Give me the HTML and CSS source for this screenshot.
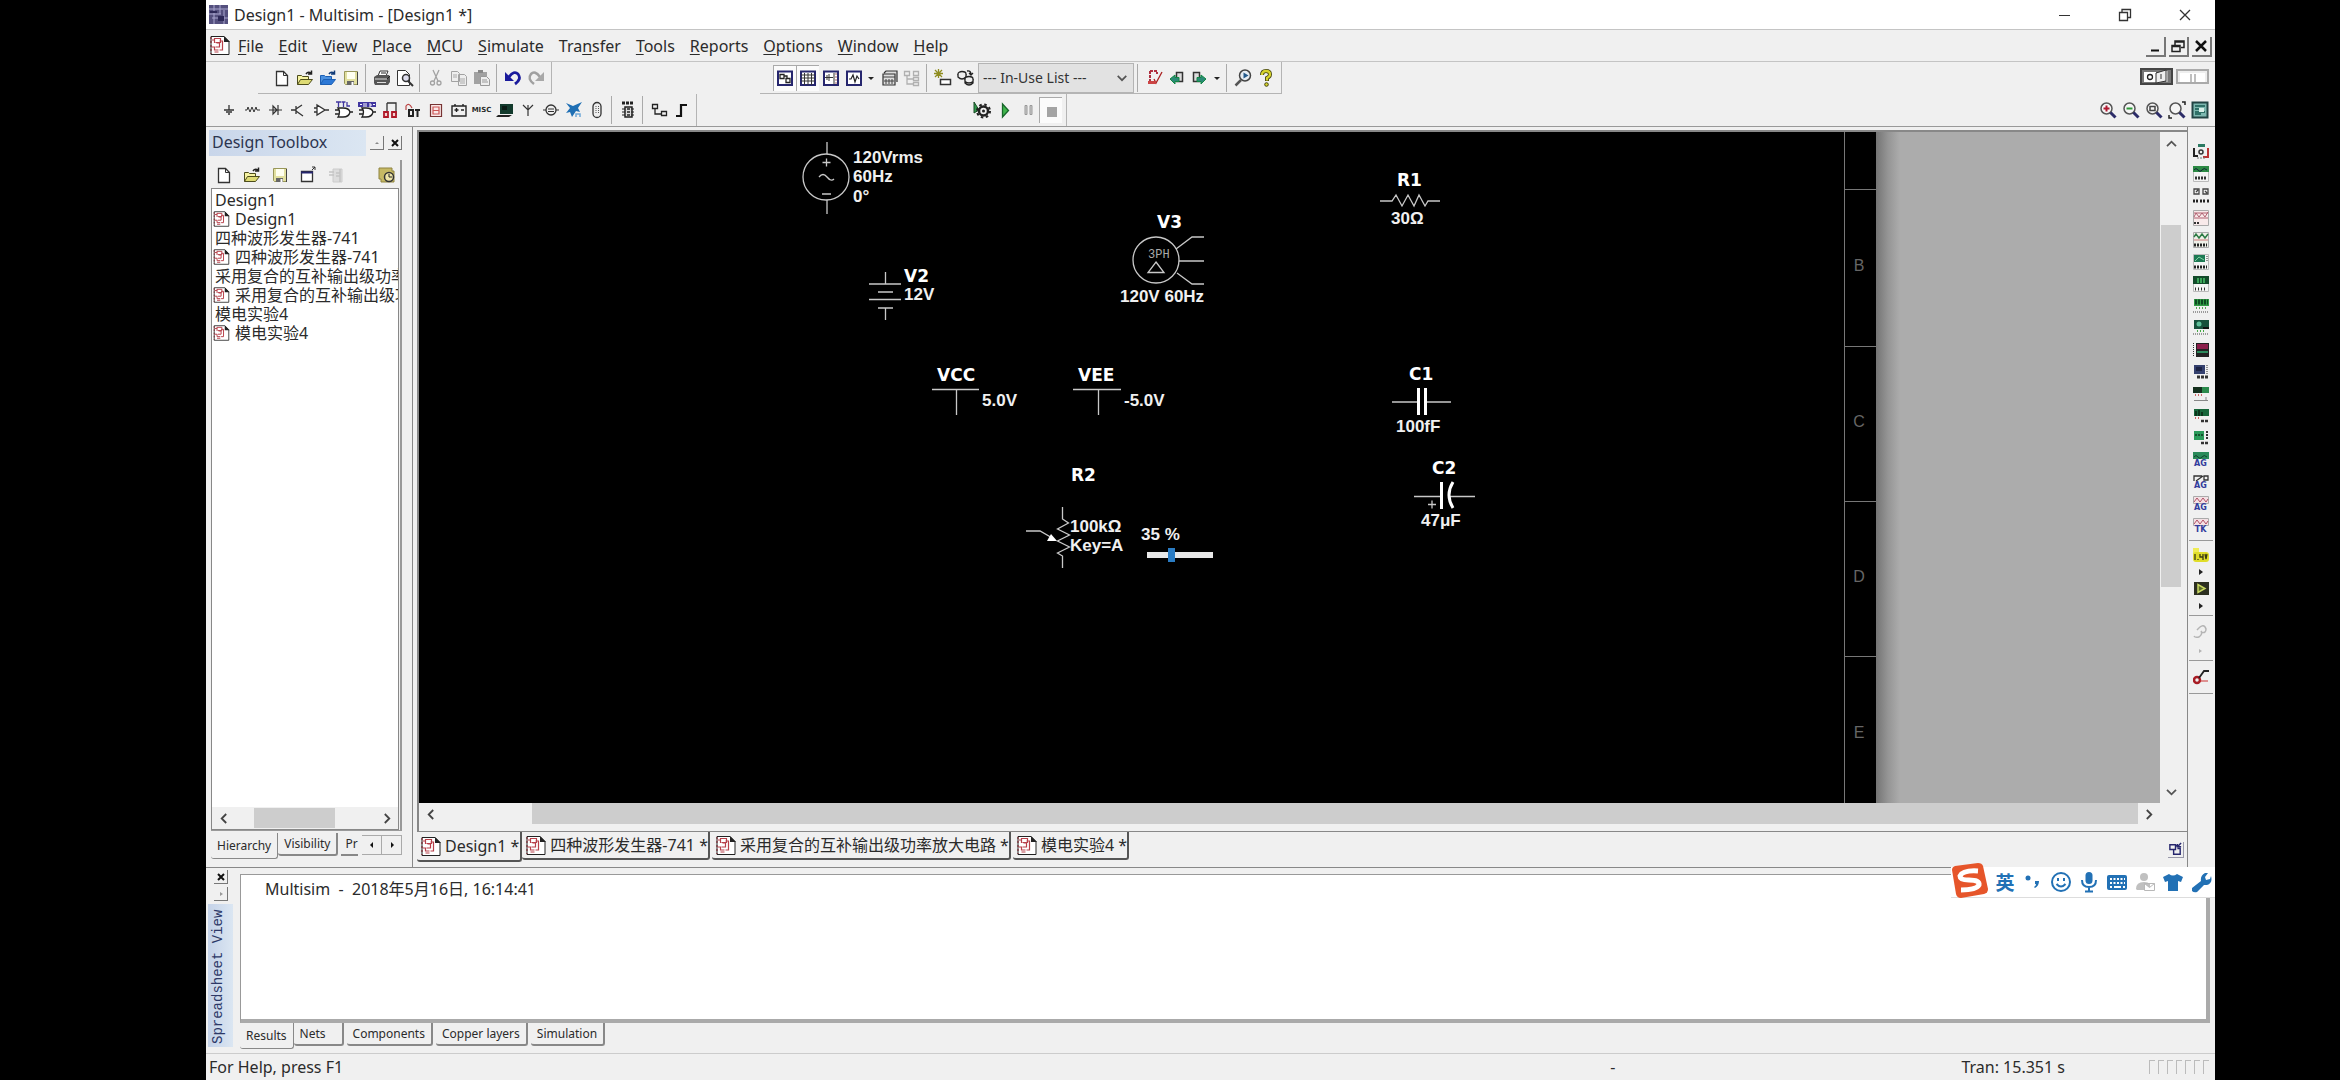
FILE: index.html
```html
<!DOCTYPE html>
<html lang="en">
<head>
<meta charset="utf-8">
<title>Design1 - Multisim - [Design1 *]</title>
<link rel="stylesheet" href="styles.css">
</head>
<body>
<svg class="defs" aria-hidden="true">
  <symbol id="i-sheet" viewBox="0 0 21 21"><path d="M1.500 1.500h13l5 5v13h-18z" fill="#fff" stroke="#222"/><path d="M14.500 1v6h6z" fill="#222"/><path d="M2 5h3M5 3v5M5 3.500h6v4h-5M7 8h3v4h-4M10 6h3v9h-3M2 12h3v3h4M5 17h4" fill="none" stroke="#b8404a" stroke-width="1.200"/><path d="M1.500 2v17" stroke="#7a1620" stroke-dasharray="2 2"/></symbol>
  <symbol id="i-new" viewBox="0 0 18 18"><path d="M3.500 2.500h7l4 4v10h-11z" fill="#fff" stroke="#333" stroke-width="1.300"/><path d="M10.500 2.500v4h4" fill="none" stroke="#333"/></symbol>
  <symbol id="i-open" viewBox="0 0 18 18"><path d="M1.500 15.500v-9h4l1 1h6v3" fill="#f6f3a2" stroke="#4d4d1c"/><path d="M1.500 15.500l3-5h12l-4 5z" fill="#dedb74" stroke="#4d4d1c"/><path d="M10 5q2-3 5-1M15.500 1.500v3.500h-3.500" fill="none" stroke="#222" stroke-width="1.500"/></symbol>
  <symbol id="i-openblue" viewBox="0 0 18 18"><path d="M1.500 15.500v-9h4l1 1h6v3" fill="#4a90e0" stroke="#1c5fb4"/><path d="M1.500 15.500l3-5h12l-4 5z" fill="#2c78d6" stroke="#1c5fb4"/><path d="M10 5q2-3 5-1M15.500 1.500v3.500h-3.500" fill="none" stroke="#123c78" stroke-width="1.500"/></symbol>
  <symbol id="i-save" viewBox="0 0 18 18"><path d="M2.500 2.500h13v13h-12l-1-1z" fill="#e2e0a0" stroke="#99975a"/><path d="M5 3h8v7h-8z" fill="#fffff0"/><path d="M5 12h7v4h-7z" fill="#666"/><path d="M9.500 13h2v3h-2z" fill="#fff"/><path d="M15.500 3v13" stroke="#444"/></symbol>
  <symbol id="i-left" viewBox="0 0 10 14"><path d="M8 2L3 7l5 5" fill="none" stroke="#444" stroke-width="2"/></symbol>
  <symbol id="i-right" viewBox="0 0 10 14"><path d="M2 2l5 5-5 5" fill="none" stroke="#444" stroke-width="2"/></symbol>
  <symbol id="i-up" viewBox="0 0 14 10"><path d="M2 8l5-5 5 5" fill="none" stroke="#555" stroke-width="2"/></symbol>
  <symbol id="i-down" viewBox="0 0 14 10"><path d="M2 2l5 5 5-5" fill="none" stroke="#555" stroke-width="2"/></symbol>
  <symbol id="i-x" viewBox="0 0 10 10"><path d="M2 2l6 6M8 2L2 8" stroke="#111" stroke-width="2"/></symbol>
  <symbol id="i-drop" viewBox="0 0 8 18"><path d="M1 8h6L4 11z" fill="#222"/></symbol>
  <symbol id="i-lens" viewBox="0 0 18 18"><circle cx="7.500" cy="7.500" r="5.500" fill="#f6f6f6" stroke="#555" stroke-width="1.500"/><path d="M11.500 11.500l5 5" stroke="#2c2c68" stroke-width="3"/></symbol>
</svg>

<div class="app">
  <header class="titlebar">
    <svg class="logo" viewBox="0 0 19 19"><rect width="19" height="19" fill="#54507e"/><path d="M0 4h19M0 9h12M3 13h16M5 0v19M11 0v9M15 5v14" stroke="#a9a6cf"/><path d="M1 6h7v2H1zM9 11h6v5H9z" fill="#2d2958"/></svg>
    <h1>Design1 - Multisim - [Design1 *]</h1>
    <div class="winbtns">
      <button aria-label="Minimize"><svg viewBox="0 0 14 14"><path d="M1 7.500h11" stroke="#333"/></svg></button>
      <button aria-label="Restore"><svg viewBox="0 0 14 14"><path d="M1.500 4.500h8v8h-8zM4 4V1.500h8.500v8H10" fill="none" stroke="#333" stroke-width="1.300"/></svg></button>
      <button aria-label="Close"><svg viewBox="0 0 14 14"><path d="M2 2l10 10M12 2L2 12" stroke="#333" stroke-width="1.300"/></svg></button>
    </div>
  </header>

  <nav class="menubar">
    <svg class="sheet"><use href="#i-sheet"/></svg>
    <button><u>F</u>ile</button><button><u>E</u>dit</button><button><u>V</u>iew</button><button><u>P</u>lace</button><button><u>M</u>CU</button><button><u>S</u>imulate</button><button>Tra<u>n</u>sfer</button><button><u>T</u>ools</button><button><u>R</u>eports</button><button><u>O</u>ptions</button><button><u>W</u>indow</button><button><u>H</u>elp</button>
    <div class="mdibtns">
      <button aria-label="Minimize sheet"><svg viewBox="0 0 16 16"><path d="M4 12.500h8" stroke="#111" stroke-width="2"/></svg></button>
      <button aria-label="Restore sheet"><svg viewBox="0 0 16 16"><path d="M2 7.500h8v6H2zM5 7V3h9v6.500h-3M2 8.500h8M5 4h9" fill="none" stroke="#222" stroke-width="1.500"/></svg></button>
      <button aria-label="Close sheet"><svg viewBox="0 0 16 16"><path d="M3 3l10 10M13 3L3 13" stroke="#111" stroke-width="2.500"/></svg></button>
    </div>
  </nav>

  <div class="toolrow">
    <div class="group standard">
      <button aria-label="New"><svg><use href="#i-new"/></svg></button>
      <button aria-label="Open"><svg><use href="#i-open"/></svg></button>
      <button aria-label="Open sample"><svg><use href="#i-openblue"/></svg></button>
      <button aria-label="Save"><svg><use href="#i-save"/></svg></button>
      <i class="sep"></i>
      <button aria-label="Print"><svg viewBox="0 0 18 18"><path d="M5 7l2-5h8l-2 5" fill="#fff" stroke="#333"/><path d="M1 8l3-2h12l1 2v5l-2 3H2l-1-2z" fill="#555"/><path d="M2 10h12M4 13.500h9" stroke="#ddd"/><path d="M14 10l3-3M8 4h5" stroke="#222"/></svg></button>
      <button aria-label="Print preview"><svg viewBox="0 0 18 18"><path d="M1.500 1.500h8l4 4v11h-12z" fill="#fff" stroke="#333"/><circle cx="10" cy="9" r="3.500" fill="#dde" stroke="#333" stroke-width="1.500"/><path d="M12 12l5 5" stroke="#333" stroke-width="2"/></svg></button>
      <i class="sep"></i>
      <button aria-label="Cut"><svg viewBox="0 0 18 18"><g fill="none" stroke="#a2a2a2" stroke-width="1.300"><path d="M6 1l5 11M12 1L7 12"/><circle cx="5.500" cy="14" r="2"/><circle cx="12" cy="14" r="2"/></g></svg></button>
      <button aria-label="Copy"><svg viewBox="0 0 18 18"><path d="M1.500 2.500h6l2 2v8h-8zM8.500 5.500h6l2 2v9h-8z" fill="#eee" stroke="#a2a2a2"/><path d="M3 6h4M3 8h4M10 10h5M10 12h5M10 14h5" stroke="#aaa"/></svg></button>
      <button aria-label="Paste"><svg viewBox="0 0 18 18"><path d="M1 3h13v12H1z" fill="#a2a2a2"/><path d="M5 1h5v3H5z" fill="#888"/><path d="M7.500 7.500h6l3 3v6h-9z" fill="#eee" stroke="#999"/><path d="M9 11h5M9 13h6" stroke="#999"/></svg></button>
      <i class="sep"></i>
      <button aria-label="Undo"><svg viewBox="0 0 18 18"><path d="M5 8q5-7 9-3 4 5-3 10" fill="none" stroke="#1a1a9c" stroke-width="2.800"/><path d="M1 3v9h9z" fill="#1a1a9c"/></svg></button>
      <button aria-label="Redo"><svg viewBox="0 0 18 18"><path d="M13 8Q8 1 4 5q-4 5 3 10" fill="none" stroke="#a0a0a0" stroke-width="2.500"/><path d="M17 3v9H8z" fill="#a8a8a8"/></svg></button>
    </div>

    <div class="group main">
      <button class="on" aria-label="Design toolbox"><svg viewBox="0 0 18 18"><path d="M2 2.500h14v13.500H2z" fill="#fff" stroke="#26266e" stroke-width="2"/><path d="M4 5.500h4v4H4zM10 9.500h4v4h-4zM8 7h3v3" fill="none" stroke="#222" stroke-width="1.300"/></svg></button>
      <button class="on" aria-label="Spreadsheet view"><svg viewBox="0 0 18 18"><path d="M2 2.500h14v13.500H2z" fill="#fff" stroke="#26266e" stroke-width="2"/><path d="M2 6h14M2 9h14M2 12h14M5.500 4v12M9 4v12M12.500 4v12" stroke="#333"/></svg></button>
      <button aria-label="SPICE netlist"><svg viewBox="0 0 18 18"><path d="M2 2.500h14v13.500H2z" fill="#fff" stroke="#26266e" stroke-width="2"/><path d="M3 8.500h8M7 5v7M5 6v5M12 4v11" stroke="#333"/><path d="M14 4v11" stroke="#a66" stroke-dasharray="2 1"/></svg></button>
      <button aria-label="Grapher"><svg viewBox="0 0 18 18"><path d="M2 2.500h14v13.500H2z" fill="#fff" stroke="#26266e" stroke-width="2"/><path d="M4 10h2l2-4 2 7 2-6 2 3" fill="none" stroke="#222" stroke-width="1.200"/></svg></button>
      <button class="drop" aria-label="Grapher list"><svg><use href="#i-drop"/></svg></button>
      <button aria-label="Postprocessor"><svg viewBox="0 0 18 18"><path d="M3 5h12v11H3zM4 4l2-2h11v11" fill="#ddd" stroke="#333" stroke-width="1.200"/><path d="M3 8h12M6 10v5M9 10v5M12 10v5M4 12h10" stroke="#444"/></svg></button>
      <button aria-label="Parent sheet"><svg viewBox="0 0 18 18"><path d="M1.500 2.500h5v4h-5zM10.500 2.500h5v4h-5zM10.500 8.500h5v3h-5zM10.500 13.500h5v3h-5zM4 7v8h6M4 10h6" fill="none" stroke="#b0b0b0" stroke-width="1.300"/></svg></button>
      <i class="sep"></i>
      <button aria-label="Component wizard"><svg viewBox="0 0 18 18"><path d="M6.500 10.500h10v5h-10z" fill="#fff" stroke="#333" stroke-width="1.500"/><path d="M1 1l7 7M8 1L1 8M4.500 0v9M0 4.500h9" stroke="#8f8d20" stroke-width="1.300"/></svg></button>
      <button aria-label="Database manager"><svg viewBox="0 0 18 18"><g fill="#eee" stroke="#222" stroke-width="1.300"><ellipse cx="5" cy="5" rx="4" ry="2.500"/><path d="M1 5v3q4 4 8 0V5"/><ellipse cx="12" cy="10" rx="4" ry="2.500"/><path d="M8 10v4q4 4 8 0v-4M8 12.500q4 3 8 0"/><path d="M10 2q4-1 4 4M12 4l2 2 2-2" fill="none"/></g></svg></button>
      <label class="inuse"><select aria-label="In-Use List"><option>--- In-Use List ---</option></select><svg><use href="#i-down"/></svg></label>
      <i class="sep"></i>
      <button aria-label="Electrical rules check"><svg viewBox="0 0 18 18"><path d="M5 2h7v3M5 2v10" fill="none" stroke="#b03040" stroke-width="2" stroke-dasharray="3 1"/><path d="M9 10l2 4 6-11" fill="none" stroke="#a22" stroke-width="1.300"/><path d="M3 12h8v3H3z" fill="#c44"/></svg></button>
      <button aria-label="Back annotate"><svg viewBox="0 0 18 18"><path d="M8.500 3.500h6v9h-6z" fill="#ddd" stroke="#333" stroke-width="1.500"/><path d="M2 10l5-4v2.500h4v4H7V15z" fill="#2b8a76" stroke="#184"/></svg></button>
      <button aria-label="Forward annotate"><svg viewBox="0 0 18 18"><path d="M2.500 3.500h6v9h-6z" fill="#ddd" stroke="#333" stroke-width="1.500"/><path d="M15 10l-5-4v2.500H6v4h4V15z" fill="#2b8a76" stroke="#184"/></svg></button>
      <button class="drop" aria-label="Annotate list"><svg><use href="#i-drop"/></svg></button>
      <i class="sep"></i>
      <button aria-label="Find"><svg viewBox="0 0 18 18"><circle cx="11" cy="6.500" r="5.500" fill="#e8eef4" stroke="#444" stroke-width="1.500"/><path d="M7 11l-5.500 5.500" stroke="#555" stroke-width="2.500"/><path d="M9.500 3.500l5 3-5 3z" fill="#245a8c"/></svg></button>
      <button aria-label="Help"><svg viewBox="0 0 18 18"><path d="M5 6q0-4 4-4t4 3.500q0 2-3 3.500v3" fill="none" stroke="#444410" stroke-width="4"/><path d="M5 6q0-4 4-4t4 3.500q0 2-3 3.500v2.500" fill="none" stroke="#d6d32c" stroke-width="2.300"/><circle cx="9.500" cy="15.500" r="1.800" fill="#d6d32c" stroke="#444410"/></svg></button>
    </div>

    <div class="switches">
      <button class="power" aria-label="Run switch"><svg viewBox="0 0 33 17"><path d="M1 1h31v15H1z" fill="#777" stroke="#444" stroke-width="2"/><path d="M4 4h12v10H4z" fill="#fff"/><circle cx="10" cy="9" r="2.500" fill="none" stroke="#222" stroke-width="1.300"/><path d="M16 5l10-3v11l-10 2z" fill="#eee" stroke="#333"/><path d="M21 6v5" stroke="#333"/><path d="M27 3v11" stroke="#ddd"/></svg></button>
      <button class="power" aria-label="Pause switch"><svg viewBox="0 0 33 17"><path d="M1 2h31v13H1z" fill="#eee" stroke="#aaa" stroke-width="2"/><path d="M4 5h25v9H4z" fill="#fff"/><path d="M15 6v8M19 6v8" stroke="#aaa" stroke-width="1.500"/></svg></button>
    </div>
  </div>

  <div class="toolrow second">
    <div class="group comps">
      <button aria-label="Sources"><svg viewBox="0 0 18 18"><path d="M9 4v5M4 9h10M6 11h6M8 13h2" stroke="#333" stroke-width="1.300"/></svg></button>
      <button aria-label="Basic"><svg viewBox="0 0 18 18"><path d="M2 9h2l1-3 2 5 2-5 2 5 2-5 1 3h3" fill="none" stroke="#333"/></svg></button>
      <button aria-label="Diodes"><svg viewBox="0 0 18 18"><path d="M3 9h13M7 5v8l4-4zM12 4v10" fill="#ddd" stroke="#333" stroke-width="1.200"/></svg></button>
      <button aria-label="Transistors"><svg viewBox="0 0 18 18"><path d="M2 9h5M7 5v8M7 8l6-4M7 10l7 5" stroke="#333" stroke-width="1.300"/></svg></button>
      <button aria-label="Analog"><svg viewBox="0 0 18 18"><path d="M5 4v10l8-5zM2 7h3M2 11h3M13 9h4" fill="#fff" stroke="#333" stroke-width="1.300"/></svg></button>
      <button aria-label="TTL"><svg viewBox="0 0 18 18"><path d="M3 7h5q6 0 7 4-1 5-7 5H3q3-5 0-9zM0 9h4M0 13h4M15 11h3" fill="#fff" stroke="#222" stroke-width="1.300"/><path d="M1 1h5M3.500 1v5M6.500 1h4M8.500 1v5M12 1v4h3" stroke="#4036a0" stroke-width="1.300" fill="none"/></svg></button>
      <button aria-label="CMOS"><svg viewBox="0 0 18 18"><path d="M4 7h4q6 0 7 4-1 5-7 5H4q3-5 0-9zM1 9h4M1 13h4M15 11h3" fill="#fff" stroke="#222" stroke-width="1.300"/><path d="M0 1h18v5H0z" fill="#4036a0"/><path d="M2 3.500h2M6 2v4M8 2v4M11 3h2v2h-2M15 3.500h2" stroke="#fff" fill="none"/></svg></button>
      <button aria-label="Miscellaneous digital"><svg viewBox="0 0 18 18"><path d="M6 2h9v12M6 2v9" fill="none" stroke="#333" stroke-width="1.300"/><path d="M3 11h4v5H3zM11 11h4v5h-4z" fill="#f4d0d0" stroke="#b01828" stroke-width="1.800"/></svg></button>
      <button aria-label="Mixed"><svg viewBox="0 0 18 18"><path d="M2 9V5q3-4 6 2" fill="none" stroke="#b44" stroke-width="1.200"/><path d="M5 9h4v6H5zM11 9h5M13.500 9v7" fill="none" stroke="#222" stroke-width="2"/></svg></button>
      <button aria-label="Indicators"><svg viewBox="0 0 18 18"><path d="M3.500 3.500h11v12h-11z" fill="#fae8e8" stroke="#733" stroke-width="1.200"/><path d="M6 6h6v3.500H6zM6 9.500h6V13H6z" fill="none" stroke="#c55" stroke-width="1.200"/></svg></button>
      <button aria-label="Power"><svg viewBox="0 0 18 18"><path d="M2 5h14v10H2zM5 3v2M13 3v2M4.500 9h4M6.500 7v4M11 9h3" fill="none" stroke="#222" stroke-width="1.400"/></svg></button>
      <button aria-label="Miscellaneous" class="misc">MISC</button>
      <button aria-label="Advanced peripherals"><svg viewBox="0 0 18 18"><path d="M4 3h13v10H4z" fill="#123a2c"/><path d="M2 14h14l-3 2H0z" fill="#222"/><path d="M6 5h5v4H6z" fill="#0a1a14"/></svg></button>
      <button aria-label="RF"><svg viewBox="0 0 18 18"><path d="M4 4l5 5 5-5M9 4v11" fill="none" stroke="#333" stroke-width="1.200"/></svg></button>
      <button aria-label="Electromechanical"><svg viewBox="0 0 18 18"><path d="M1 9h16" stroke="#333"/><circle cx="9" cy="9" r="5" fill="#eee" stroke="#333" stroke-width="1.300"/><path d="M6 8h6M6 10.500h6" stroke="#333"/></svg></button>
      <button aria-label="NI components"><svg viewBox="0 0 18 18"><path d="M1 2l7 3 9-4-4 6 2 4-4-1-4 6-2-5-4 1 4-5z" fill="#1f6fb4"/><path d="M11 16v-3h4v3" fill="none" stroke="#6fa8d8" stroke-width="1.500"/></svg></button>
      <button aria-label="Connectors"><svg viewBox="0 0 18 18"><rect x="5" y="1.500" width="8" height="15" rx="4" fill="#eee" stroke="#333" stroke-width="1.300"/><path d="M8 5v8M10.500 5v8" stroke="#555" stroke-dasharray="1 1"/></svg></button>
      <i class="sep"></i>
      <button aria-label="MCU"><svg viewBox="0 0 18 18"><path d="M3 2h11" stroke="#222" stroke-width="3" stroke-dasharray="3 1"/><path d="M6 6h7v10H6z" fill="#ddd" stroke="#222" stroke-width="1.500"/><path d="M3 8h12M3 11h12M3 14h12" stroke="#222" stroke-dasharray="3 6"/><path d="M8 8h3M8 11h3M8 14h3" stroke="#222" stroke-width="1.500"/></svg></button>
      <i class="sep"></i>
      <button aria-label="Hierarchical block"><svg viewBox="0 0 18 18"><path d="M2.500 3.500h5v4h-5zM11.500 10.500h5v4h-5zM5 8v5h6" fill="none" stroke="#222" stroke-width="1.300"/></svg></button>
      <button aria-label="Bus"><svg viewBox="0 0 18 18"><path d="M3 15h5V4h6" fill="none" stroke="#111" stroke-width="2.200"/></svg></button>
    </div>

    <div class="group sim">
      <button aria-label="Interactive simulation"><svg viewBox="0 0 18 18"><path d="M1 1v11l5-3z" fill="#2f9a4a" stroke="#1a4a26"/><circle cx="10.500" cy="10" r="4.500" fill="none" stroke="#222" stroke-width="2.500"/><circle cx="10.500" cy="10" r="6.500" fill="none" stroke="#222" stroke-width="2" stroke-dasharray="2.500 2.600"/><circle cx="10.500" cy="10" r="1.500" fill="#222"/></svg></button>
      <button aria-label="Run"><svg viewBox="0 0 18 18"><path d="M6.500 3v13l6-6.500z" fill="#3fb54c" stroke="#17662a" stroke-width="1.300"/></svg></button>
      <button aria-label="Pause"><svg viewBox="0 0 18 18"><path d="M6 4.500h2v9H6zM11 4.500h2v9h-2z" fill="#ccc" stroke="#999"/></svg></button>
      <button class="on" aria-label="Stop"><svg viewBox="0 0 18 18"><path d="M5 5h10v10H5z" fill="#a4a4a4"/></svg></button>
    </div>

    <div class="zooms">
      <button aria-label="Zoom in"><svg><use href="#i-lens"/><path d="M4.500 7.500h6M7.500 4.500v6" stroke="#b01830" stroke-width="2"/></svg></button>
      <button aria-label="Zoom out"><svg><use href="#i-lens"/><path d="M4.500 7.500h6" stroke="#2f9a3a" stroke-width="2"/></svg></button>
      <button aria-label="Zoom area"><svg><use href="#i-lens"/><path d="M5 5.500h5v4H5z" fill="none" stroke="#444" stroke-width="1.500"/></svg></button>
      <button aria-label="Zoom sheet"><svg><use href="#i-lens"/><path d="M14 1l3 0v3M1 14v3h3" fill="none" stroke="#222" stroke-width="1.500"/></svg></button>
      <button aria-label="Full screen"><svg viewBox="0 0 18 18"><path d="M1.500 1.500h15v15h-15z" fill="#7db8b0" stroke="#244" stroke-width="2"/><path d="M4 5h10M4 8h7M4 11h10M4 13h6" stroke="#165a50" stroke-width="1.500"/><path d="M8 7h5v4H8z" fill="#d8efe8"/></svg></button>
    </div>
  </div>

  <div class="middle">
    <aside class="toolbox">
      <div class="tb-head">
        <h2>Design Toolbox</h2>
        <button class="tiny" aria-label="Collapse"><svg viewBox="0 0 10 10"><path d="M3 6l2-2 2 2z" fill="#888"/></svg></button>
        <button class="tiny" aria-label="Close toolbox"><svg><use href="#i-x"/></svg></button>
      </div>
      <div class="tb-body">
        <div class="tb-tools">
          <button aria-label="New design"><svg><use href="#i-new"/></svg></button>
          <button aria-label="Open design"><svg><use href="#i-open"/></svg></button>
          <button aria-label="Save design"><svg><use href="#i-save"/></svg></button>
          <button aria-label="Close design"><svg viewBox="0 0 18 18"><path d="M2.500 5.500h11v10h-11z" fill="#fff" stroke="#333" stroke-width="1.300"/><path d="M2 6.500h12" stroke="#26266e" stroke-width="2"/><path d="M13 4l3-3M13 1h3v3" fill="none" stroke="#333"/></svg></button>
          <button aria-label="Rename"><svg viewBox="0 0 18 18"><path d="M6 3h9v13H6z" fill="#ddd" stroke="#ccc"/><path d="M2 6h5M2 9h5M9 7h4M9 10h4M13 3v13" stroke="#c4c4c4" stroke-width="1.500"/></svg></button>
          <button class="last" aria-label="History"><svg viewBox="0 0 18 18"><path d="M1 2h13v3h2v11H3v-3H1z" fill="#c6b964" stroke="#8f8440"/><circle cx="11" cy="11" r="4.500" fill="#eee5a8" stroke="#333" stroke-width="1.500"/><path d="M11 8v3h3" fill="none" stroke="#222"/></svg></button>
        </div>
        <div class="treebox">
          <ul class="tree">
            <li>Design1</li>
            <li class="child"><svg><use href="#i-sheet"/></svg>Design1</li>
            <li>四种波形发生器-741</li>
            <li class="child"><svg><use href="#i-sheet"/></svg>四种波形发生器-741</li>
            <li>采用复合的互补输出级功率放大电路</li>
            <li class="child"><svg><use href="#i-sheet"/></svg>采用复合的互补输出级功率放大电路</li>
            <li>模电实验4</li>
            <li class="child"><svg><use href="#i-sheet"/></svg>模电实验4</li>
          </ul>
          <div class="hbar"><button aria-label="Scroll left"><svg><use href="#i-left"/></svg></button><span class="thumb"></span><button aria-label="Scroll right"><svg><use href="#i-right"/></svg></button></div>
        </div>
      </div>
      <div class="tabs small">
        <button class="active">Hierarchy</button><button>Visibility</button><button class="cut">Pr</button>
        <span class="spin"><button aria-label="Previous tabs"><svg viewBox="0 0 8 8"><path d="M5 1v6L2 4z" fill="#111"/></svg></button><button aria-label="Next tabs"><svg viewBox="0 0 8 8"><path d="M3 1v6l3-3z" fill="#111"/></svg></button></span>
      </div>
    </aside>

    <main class="workspace">
      <div class="view">
        <div class="canvas">
          <svg class="drawing" viewBox="419 132 1457 671">
            <rect x="419" y="132" width="1457" height="671" fill="#000"/>
            <g class="frame"><path d="M1844.500 132v671M1844 189.500h32M1844 346.500h32M1844 501.500h32M1844 656.500h32"/></g>
            <g class="zone"><text x="1859" y="271">B</text><text x="1859" y="427">C</text><text x="1859" y="582">D</text><text x="1859" y="738">E</text></g>
            <g class="wire">
              <path d="M827 142v12M827 200v14M822.500 162.500h8M826.500 158.500v8M822 194h9M819 177q4-5 8 0t7 2"/>
              <circle cx="826" cy="177" r="23"/>
              <path d="M885.500 272v12M869 284h32M878 292h15M869 299.500h32M878 308h15M885.500 308v12"/>
              <circle cx="1156" cy="260" r="23"/>
              <path d="M1156 262l8 10.500h-16zM1176 249l16-12h12M1179 261h25M1177 273l15 11h12"/>
              <path d="M932 389.500h47M956.500 390v25M1073 389.500h48M1098.500 390v25"/>
              <path d="M1380 201h12l4-6 6 11 6-11 6 11 5-11 6 11 3-5h12"/>
              <path d="M1392 402h26M1426 402h25M1414 496.500h27M1449 496.500h26M1428 504.500h8M1432 500.500v8"/>
              <path d="M1062.500 507v12l6 4-11 6 12 6-12 6 12 6-12 6 5 3v12M1026 531h14l14 8"/>
            </g>
            <path d="M1418.500 388v27M1425.500 388v27M1441.500 482v27M1453 482q-8 13 0 26" fill="none" stroke="#fff" stroke-width="3"/>
            <path d="M1051 534l6 7h-10z" fill="#fff"/>
            <g class="value">
              <text x="853" y="163">120Vrms</text><text x="853" y="182">60Hz</text><text x="853" y="202">0°</text>
              <text x="904" y="300">12V</text><text x="1120" y="302">120V 60Hz</text>
              <text x="982" y="406">5.0V</text><text x="1124" y="406">-5.0V</text>
              <text x="1391" y="224">30Ω</text><text x="1396" y="432">100fF</text><text x="1421" y="526">47μF</text>
              <text x="1070" y="532">100kΩ</text><text x="1070" y="551">Key=A</text><text x="1141" y="540">35 %</text>
            </g>
            <g class="ref">
              <text x="904" y="282">V2</text><text x="1157" y="228">V3</text><text x="937" y="381">VCC</text><text x="1078" y="381">VEE</text>
              <text x="1397" y="186">R1</text><text x="1409" y="380">C1</text><text x="1432" y="474">C2</text><text x="1071" y="481">R2</text>
            </g>
            <text class="phase" x="1148" y="258">3PH</text>
          </svg>
          <input class="pot" type="range" min="0" max="100" value="35" aria-label="R2 position">
          <div class="void"></div>
        </div>
        <div class="vbar"><button aria-label="Scroll up"><svg><use href="#i-up"/></svg></button><span class="thumb"></span><button aria-label="Scroll down"><svg><use href="#i-down"/></svg></button></div>
        <div class="hbar"><button aria-label="Scroll sheet left"><svg><use href="#i-left"/></svg></button><span class="thumb"></span><button aria-label="Scroll sheet right"><svg><use href="#i-right"/></svg></button></div>
      </div>
      <div class="tabs docs">
        <button class="active"><svg class="sheet"><use href="#i-sheet"/></svg>Design1 *</button><button><svg class="sheet"><use href="#i-sheet"/></svg>四种波形发生器-741 *</button><button><svg class="sheet"><use href="#i-sheet"/></svg>采用复合的互补输出级功率放大电路 *</button><button><svg class="sheet"><use href="#i-sheet"/></svg>模电实验4 *</button>
        <span class="arrange"><svg viewBox="0 0 16 16"><path d="M2 3h6v5H2zM6 8v5h7V7h-3M8 4h3M14 1l-4 4M10 2v3h4" fill="none" stroke="#26266e" stroke-width="1.500"/></svg></span>
      </div>
    </main>

    <aside class="instruments">
      <button aria-label="Multimeter"><svg viewBox="0 0 16 16"><path d="M5 0h7v3H5z" fill="#2b7a62"/><path d="M1 4v8h4" fill="none" stroke="#222" stroke-width="2"/><path d="M15 4v9h-5" fill="none" stroke="#b33" stroke-width="2"/><circle cx="8" cy="8" r="2" fill="none" stroke="#333" stroke-width="1.500"/><path d="M4 14h8" stroke="#777" stroke-dasharray="2 1"/></svg></button>
      <button aria-label="Function generator"><svg viewBox="0 0 16 16"><path d="M.5.500h15v15H.5z" fill="#f4f4f4" stroke="#bbb"/><path d="M0 0h16v6H0z" fill="#2c8a44"/><path d="M1 4q2-3 4 0t4 0 5 0" fill="none" stroke="#123"/><path d="M2 12h12" stroke="#333" stroke-width="3" stroke-dasharray="2 1"/></svg></button>
      <button aria-label="Wattmeter"><svg viewBox="0 0 16 16"><path d="M1 1h5v5H1zM10 1h5v5h-5zM3 4l2-2M12 3l2 2" fill="none" stroke="#444" stroke-width="1.300"/><path d="M0 13h16" stroke="#222" stroke-width="3" stroke-dasharray="2 1 2 2"/></svg></button>
      <button aria-label="Oscilloscope"><svg viewBox="0 0 16 16"><path d="M.5.500h15v15H.5z" fill="#f8eaea" stroke="#aaa"/><path d="M1 7l2-4 3 4 3-4 3 4 3-5M1 3h14M1 8h14" fill="none" stroke="#b06070"/><path d="M1 13h6" stroke="#333" stroke-width="2" stroke-dasharray="2 1"/></svg></button>
      <button aria-label="Four channel oscilloscope"><svg viewBox="0 0 16 16"><path d="M.5.500h15v15H.5z" fill="#eef0e8" stroke="#aaa"/><path d="M1 5l2-3 3 4 3-4 3 4 3-4" fill="none" stroke="#2c7a44" stroke-width="1.500"/><path d="M1 8h14" stroke="#c77"/><path d="M1 13h13" stroke="#222" stroke-width="3" stroke-dasharray="2 1"/></svg></button>
      <button aria-label="Bode plotter"><svg viewBox="0 0 16 16"><path d="M.5.500h15v15H.5z" fill="#f4f4f4" stroke="#bbb"/><path d="M1 1h11v7H1z" fill="#1d7a54"/><path d="M2 7l4-4 5 3" stroke="#7fd0a0" fill="none"/><path d="M14 2v5" stroke="#333" stroke-dasharray="1 1"/><path d="M1 13h13" stroke="#222" stroke-width="3" stroke-dasharray="2 1"/></svg></button>
      <button aria-label="Frequency counter"><svg viewBox="0 0 16 16"><path d="M.5.500h15v15H.5z" fill="#f4f4f4" stroke="#bbb"/><path d="M0 0h16v8H0z" fill="#124a2a"/><path d="M5 2v5M8 2v5M11 2v5" stroke="#49c46a" stroke-width="1.500"/><path d="M2 13h12" stroke="#333" stroke-width="3" stroke-dasharray="1 2"/></svg></button>
      <button aria-label="Word generator"><svg viewBox="0 0 16 16"><path d="M1 1h15v7H1z" fill="#2f9a44"/><path d="M2 4h13" stroke="#0c4a20" stroke-width="5" stroke-dasharray="2 1"/><path d="M3 10h12" stroke="#5a5" stroke-dasharray="1 2" stroke-width="2"/><path d="M0 14h16" stroke="#444" stroke-dasharray="1 1"/></svg></button>
      <button aria-label="Logic converter"><svg viewBox="0 0 16 16"><path d="M1 0h15v9H1z" fill="#17503c"/><circle cx="6" cy="4" r="2.500" fill="#5fbf9a"/><path d="M10 7h6v2h-6z" fill="#111"/><path d="M4 11h9" stroke="#4a4" stroke-dasharray="1 2" stroke-width="2"/><path d="M0 14h16" stroke="#444" stroke-dasharray="1 1"/></svg></button>
      <button aria-label="Logic analyzer"><svg viewBox="0 0 16 16"><path d="M.5 1v14" stroke="#333" stroke-dasharray="1 1"/><path d="M3 1h13v14H3z" fill="#222"/><path d="M4 2h11v5H4z" fill="#8c1f4c"/><path d="M4 9h11v2H4z" fill="#2c8a5c"/></svg></button>
      <button aria-label="IV analyzer"><svg viewBox="0 0 16 16"><path d="M1 1h11v9H1z" fill="#34406e"/><path d="M3 3h6v4H3z" fill="#1c2244"/><path d="M14 1v9" stroke="#333" stroke-dasharray="1 1"/><path d="M4 13h11" stroke="#333" stroke-width="3" stroke-dasharray="3 1"/></svg></button>
      <button aria-label="Distortion analyzer"><svg viewBox="0 0 16 16"><path d="M0 1h16v6H0z" fill="#15301e"/><path d="M9 1h7v6H9z" fill="#2b8a4c"/><path d="M2 9h9" stroke="#c66" stroke-dasharray="1 2" stroke-width="2"/><path d="M1 14.500h14M13 11v3" stroke="#888"/></svg></button>
      <button aria-label="Spectrum analyzer"><svg viewBox="0 0 16 16"><path d="M1 1h15v7H1z" fill="#17663a"/><path d="M3 3v5M6 2v6M9 4v4" stroke="#0a2412" stroke-width="1.500"/><path d="M2 10h6" stroke="#c66" stroke-dasharray="1 2" stroke-width="2"/><path d="M8 13h7" stroke="#333" stroke-width="2.500" stroke-dasharray="3 1"/></svg></button>
      <button aria-label="Network analyzer"><svg viewBox="0 0 16 16"><path d="M1 1h10v9H1z" fill="#2b9a5a"/><path d="M2 5h8" stroke="#14502c" stroke-width="2" stroke-dasharray="2 1"/><path d="M14 1v8" stroke="#333" stroke-dasharray="2 1" stroke-width="2"/><path d="M8 13h7" stroke="#333" stroke-width="2.500" stroke-dasharray="3 1"/></svg></button>
      <button aria-label="Agilent function generator"><svg viewBox="0 0 16 16"><path d="M0 0h16v7H0z" fill="#2b8a5a"/><path d="M1 5q2-3 4 0t4 0 5 0" fill="none" stroke="#10402c"/></svg><b>AG</b></button>
      <button aria-label="Agilent multimeter"><svg viewBox="0 0 16 16"><path d="M1 7V2h8M3 7l7-5M11 2h4v4h-4z" fill="none" stroke="#333" stroke-width="1.300"/></svg><b>AG</b></button>
      <button aria-label="Agilent oscilloscope"><svg viewBox="0 0 16 16"><path d="M.5.500h15v7H.5z" fill="#f4e0e4" stroke="#aaa"/><path d="M1 6l3-4 3 4 3-4 3 4 2-3" fill="none" stroke="#b05064"/></svg><b>AG</b></button>
      <button aria-label="Tektronix oscilloscope"><svg viewBox="0 0 16 16"><path d="M.5.500h15v7H.5z" fill="#f4e0e4" stroke="#aaa"/><path d="M1 6l3-4 3 4 3-4 3 4 2-3" fill="none" stroke="#b05064"/></svg><b>TK</b></button>
      <hr>
      <button class="probe" aria-label="Measurement probe"><svg viewBox="0 0 16 16"><path d="M0 1h6v6H0z" fill="#efec54"/><rect y="5" width="16" height="10" rx="3" fill="#e0dd28"/><path d="M2 7v6M5 12v1M7 7v3h3M10 7v6M12 7l1 5 1-5" fill="none" stroke="#3a3a10" stroke-width="1.300"/></svg></button>
      <button class="arrow" aria-label="Probe list"><svg viewBox="0 0 8 8"><path d="M2 1l4 3-4 3z" fill="#222"/></svg></button>
      <button aria-label="LabVIEW instruments"><svg viewBox="0 0 16 16"><path d="M1 1h15v13H1z" fill="#2c2f20"/><path d="M5 3.500v8l7-4z" fill="#5a6b28" stroke="#c9d860" stroke-width="1.500"/></svg></button>
      <button class="arrow" aria-label="LabVIEW list"><svg viewBox="0 0 8 8"><path d="M2 1l4 3-4 3z" fill="#222"/></svg></button>
      <hr>
      <button class="gap" aria-label="NI ELVISmx"><svg viewBox="0 0 16 16"><path d="M4 6q7-8 9-1 0 5-5 3M8 7q2 3-2 6-4 1-5-1" fill="none" stroke="#b4b4b4" stroke-width="1.500"/></svg></button>
      <button class="arrow" aria-label="ELVIS list"><svg viewBox="0 0 8 8"><path d="M2 2l3 2-3 2z" fill="#b4b4b4"/></svg></button>
      <hr>
      <button class="gap" aria-label="Current probe"><svg viewBox="0 0 16 16"><circle cx="4" cy="11" r="3" fill="none" stroke="#a81c24" stroke-width="2.500"/><path d="M6 9l5-7h5" fill="none" stroke="#222" stroke-width="1.800"/><path d="M7 12h8" stroke="#c33"/></svg></button>
      <hr>
    </aside>
  </div>

  <section class="sheetview">
    <div class="strip">
      <button class="tiny" aria-label="Close spreadsheet"><svg><use href="#i-x"/></svg></button>
      <button class="tiny" aria-label="Collapse spreadsheet"><svg viewBox="0 0 10 10"><path d="M4 3l3 2-3 2z" fill="#999"/></svg></button>
      <h2>Spreadsheet View</h2>
    </div>
    <div class="results">
      <div class="log">Multisim &nbsp;-&nbsp; 2018年5月16日, 16:14:41</div>
      <div class="tabs small">
        <button class="active">Results</button><button class="nets">Nets</button><button>Components</button><button>Copper layers</button><button>Simulation</button>
      </div>
    </div>
    <div class="ime">
      <svg class="sogou" viewBox="0 0 38 38"><path d="M1 8q0-3 3-4L27 1q4 0 5 3l5 23q0 4-4 5L10 36q-4 0-5-4z" fill="#e6552a"/><path d="M27 9Q12 8 9 14q0 4 9 4 11 0 10 5-3 5-18 5" fill="none" stroke="#fff" stroke-width="5"/></svg>
      <button class="lang">英</button>
      <button aria-label="Punctuation"><svg viewBox="0 0 22 22"><circle cx="6" cy="7" r="2.500" fill="#2271b5"/><path d="M13 10h4q0 5-4 7l-1-1q2-1 2-3h-1z" fill="#2271b5"/></svg></button>
      <button aria-label="Emoji"><svg viewBox="0 0 22 22"><circle cx="11" cy="11" r="9" fill="none" stroke="#2271b5" stroke-width="2"/><path d="M8 7v3M14 7v3M6.500 13q4.500 5 9 0" fill="none" stroke="#2271b5" stroke-width="2"/></svg></button>
      <button aria-label="Voice"><svg viewBox="0 0 22 22"><rect x="7.500" y="1" width="7" height="12" rx="3.500" fill="#2271b5"/><path d="M4 9q0 7 7 7t7-7M11 16v4M7 20.500h8" fill="none" stroke="#2271b5" stroke-width="2"/></svg></button>
      <button aria-label="Soft keyboard"><svg viewBox="0 0 22 22"><rect x="1" y="4" width="20" height="15" rx="2" fill="#2271b5"/><path d="M4 8h15M4 12h15" stroke="#fff" stroke-width="2" stroke-dasharray="2 1.500"/><path d="M4 16h2M8 16h7M17 16h2" stroke="#fff" stroke-width="2"/></svg></button>
      <button aria-label="Account"><svg viewBox="0 0 22 22"><circle cx="10" cy="6" r="4" fill="#c0c0c0"/><path d="M2 18q0-7 8-7 4 0 6 2v6H3z" fill="#c0c0c0"/><path d="M10.500 12.500h10v7h-10zl5 4 5-4" fill="#fff" stroke="#b8b8b8"/></svg></button>
      <button aria-label="Skin"><svg viewBox="0 0 22 22"><path d="M7 3q4 3 8 0l6 3-2 5-3-1v10H6V10l-3 1-2-5z" fill="#2271b5"/></svg></button>
      <button aria-label="Tools"><svg viewBox="0 0 22 22"><path d="M2 17l9-7q-1-5 4-8l3 0-3 4 1 3 4-1 1-3q2 7-4 9l-3 0-7 7q-3 1-5-1z" fill="#2271b5"/></svg></button>
    </div>
  </section>

  <footer class="status">
    <span class="help">For Help, press F1</span>
    <span class="dash">-</span>
    <span class="tran">Tran: 15.351 s</span>
    <span class="cells"><i></i><i></i><i></i><i></i><i></i><i></i><i></i></span>
  </footer>
</div>
</body>
</html>
```
FILE: styles.css
```css
* { box-sizing: border-box; }
body {
  margin: 0;
  background: #000;
  color: #2b2b2b;
  font: 16px/20px "Noto Sans", "Noto Sans CJK SC", sans-serif;
}
button {
  border: 0;
  padding: 0;
  margin: 0;
  background: none;
  font: inherit;
  color: inherit;
}
h1, h2 { margin: 0; font-size: 16px; font-weight: 400; }
svg { display: block; }
.defs { position: absolute; width: 0; height: 0; }

.app {
  display: flex;
  flex-direction: column;
  min-height: 100vh;
  margin: 0 125px 0 206px;
  background: #f0f0f0;
  border-bottom: 2px solid #000;
}

/* Title and menu */
.titlebar {
  display: flex;
  align-items: center;
  height: 29px;
  padding-left: 3px;
  background: #fff;
}
.logo { width: 19px; height: 19px; margin-right: 6px; }
.winbtns { display: flex; margin-left: auto; }
.winbtns button { width: 60px; display: grid; place-items: center; }
.winbtns svg { width: 14px; height: 14px; }
.menubar {
  display: flex;
  align-items: center;
  gap: 15px;
  height: 33px;
  padding-left: 3px;
  border: solid #c4c4c4;
  border-width: 1px 0;
}
.sheet { width: 22px; height: 21px; flex: none; }
.menubar .sheet { margin-right: -8px; }
.menubar u { text-underline-offset: 2px; }
.mdibtns { display: flex; gap: 3px; margin: 2px 3px 0 auto; }
.mdibtns button {
  width: 20px;
  height: 20px;
  display: grid;
  place-items: center;
  border: solid #777;
  border-width: 0 2px 2px 0;
}
.mdibtns svg { width: 16px; height: 16px; }

/* Toolbars */
.toolrow { display: flex; height: 32px; }
.second { height: 33px; border-bottom: 1px solid #999; }
.group {
  display: flex;
  align-items: center;
  flex: none;
  border: solid #b4b4b4;
  border-width: 0 1px 1px 0;
}
.second .group { border-bottom: 0; }
.group button, .zooms button {
  display: grid;
  place-items: center;
  width: 23px;
  height: 24px;
}
.group svg, .zooms svg { width: 18px; height: 18px; }
.sep {
  width: 5px;
  height: 28px;
  margin-left: 3px;
  border-left: 1px solid #aaa;
}
.standard { margin-left: 52px; padding: 0 4px 0 12px; }
.main { margin-left: 208px; padding: 0 4px 0 13px; }
.main .on, .sim .on {
  height: 26px;
  background: #fbfbfb;
  border: solid #aaa;
  border-width: 1px 0 0 1px;
}
.group .drop { width: 12px; }
.drop svg { width: 8px; }
.inuse { position: relative; margin: 0 0 0 1px; }
.inuse select {
  display: block;
  appearance: none;
  width: 156px;
  height: 30px;
  padding: 0 4px;
  border: 1px solid #b4b4b4;
  border-radius: 0;
  background: #e2e2e2;
  color: #333;
  font: 14px/20px "Noto Sans", sans-serif;
}
.group .inuse svg { position: absolute; right: 6px; top: 11px; width: 12px; height: 9px; }
.switches { display: flex; align-items: center; gap: 3px; margin: 0 6px 4px auto; }
.power svg { width: 33px; height: 17px; }
.comps { padding: 0 3px 0 11px; }
.comps .misc { font: bold 7px/20px "DejaVu Sans", sans-serif; }
.sim { margin-left: 273px; padding-right: 4px; }
.zooms { display: flex; align-items: center; margin: 0 4px 0 auto; }

/* Middle */
.middle { display: flex; flex: 1; min-height: 0; }
.toolbox {
  display: flex;
  flex-direction: column;
  width: 207px;
  flex: none;
  padding: 3px 10px 0 3px;
  border-right: 1px solid #888;
}
.tb-head { display: flex; align-items: center; gap: 4px; height: 26px; }
.tb-head h2 {
  flex: 1;
  height: 26px;
  padding-left: 3px;
  line-height: 24px;
  color: #2c3550;
  background: linear-gradient(90deg, #c9d6ea, #dbe6f2);
}
.tiny {
  display: grid;
  place-items: center;
  width: 14px;
  height: 14px;
  border: solid #777;
  border-width: 0 1px 1px 0;
}
.tiny svg { width: 10px; height: 10px; }
.tb-body {
  display: flex;
  flex-direction: column;
  flex: 1;
  margin: 4px 0 0 2px;
  border: solid #999;
  border-width: 0 2px 1px 0;
}
.tb-tools { display: flex; align-items: center; gap: 10px; height: 28px; padding: 2px 4px 0; }
.tb-tools svg { width: 18px; height: 18px; }
.tb-tools .last { margin-left: auto; }
.treebox {
  display: flex;
  flex-direction: column;
  flex: 1;
  margin-right: 1px;
  border: 1px solid #888;
  background: #fff;
  overflow: hidden;
}
.tree { list-style: none; margin: 0; padding: 1px 0 0; flex: 1; }
.tree li {
  display: flex;
  align-items: center;
  height: 19px;
  padding-left: 3px;
  white-space: nowrap;
}
.tree .child { padding-left: 1px; gap: 5px; }
.tree svg { width: 17px; height: 18px; flex: none; }
.hbar { display: flex; height: 22px; background: #f0f0f0; }
.hbar button, .vbar button { display: grid; place-items: center; flex: none; }
.thumb { background: #cdcdcd; }
.hbar svg { width: 9px; height: 13px; }
.hbar button { width: 22px; }
.treebox .thumb { width: 81px; margin: 1px auto 1px 20px; }

.tabs { display: flex; align-items: flex-start; }
.tabs button {
  border: solid #888;
  border-width: 0 2px 2px 0;
  border-radius: 0 0 3px 3px;
  white-space: nowrap;
}
.small { height: 34px; font-size: 12px; }
.small button { height: 23px; padding: 0 6px; margin-right: 3px; line-height: 20px; }
.small .active { height: 26px; margin-right: 0; line-height: 26px; border-width: 0 1px 1px 0; }
.toolbox .small { margin: 2px 0 0 2px; }
.small .cut { padding: 0 0 0 4px; margin: 0; border-right: 0; border-radius: 0; }
.spin { display: flex; margin: 2px 0 0 auto; }
.small .spin button {
  display: grid;
  place-items: center;
  width: 20px;
  height: 20px;
  padding: 0;
  margin: 0;
  border: solid #aaa;
  border-width: 1px 1px 1px 0;
  border-radius: 0;
}
.spin svg { width: 8px; height: 8px; }

.workspace { display: flex; flex-direction: column; flex: 1; min-width: 0; padding: 3px 0 0 4px; }
.view {
  display: grid;
  grid-template: 1fr 22px / 1fr 22px;
  flex: 1;
  padding: 0 5px 6px 0;
  border: solid #888;
  border-width: 2px 0 1px 2px;
}
.canvas { position: relative; display: flex; overflow: hidden; background: #000; }
.drawing { width: 1457px; height: 671px; flex: none; }
.void { flex: 1; background: linear-gradient(90deg, #747474, #959595 12px, #acacac 24px); }
.frame { fill: none; stroke: #777; }
.zone { fill: #666; font: 16px "Liberation Sans", sans-serif; text-anchor: middle; }
.wire { fill: none; stroke: #c8c8c8; stroke-width: 1.3; }
.value { fill: #f0f0f0; font: bold 17px "Liberation Sans", sans-serif; }
.ref { fill: #fff; font: bold 17px "DejaVu Sans", sans-serif; }
.phase { fill: #aaa; font: 12px "Liberation Mono", monospace; }
.pot {
  position: absolute;
  left: 728px;
  top: 416px;
  width: 66px;
  height: 14px;
  margin: 0;
  appearance: none;
  background: linear-gradient(#e8e8e8, #e8e8e8) center / 100% 6px no-repeat;
}
.pot::-webkit-slider-thumb { appearance: none; width: 7px; height: 14px; background: #2a7cc4; }
.vbar { display: flex; flex-direction: column; background: #f0f0f0; }
.vbar button { height: 22px; }
.vbar svg { width: 13px; height: 9px; }
.vbar .thumb { flex: none; height: 54%; margin: 71px 1px auto; }
.view .hbar .thumb { flex: 1; margin: 0 0 1px 91px; }
.docs { height: 35px; }
.docs button {
  display: flex;
  align-items: center;
  gap: 3px;
  height: 28px;
  padding: 0 0 0 3px;
  margin-right: 2px;
  border-color: #555;
}
.docs .active { height: 30px; margin-right: 0; padding-right: 1px; }
.arrange { margin: 10px 3px 0 auto; border: solid #99a; border-width: 0 1px 1px 0; }
.arrange svg { width: 15px; height: 15px; }

.instruments {
  display: flex;
  flex-direction: column;
  align-items: center;
  width: 28px;
  flex: none;
  padding: 14px 2px 0 0;
  border-left: 1px solid #888;
}
.instruments button {
  display: flex;
  flex-direction: column;
  align-items: center;
  justify-content: center;
  width: 22px;
  height: 22px;
  flex: none;
}
.instruments button svg { width: 16px; height: 16px; flex: none; }
.instruments b { height: 8px; margin-top: -8px; color: #333c9c; font: bold 8px/8px "DejaVu Sans", sans-serif; }
.instruments .arrow { height: 12px; }
.instruments .arrow svg { width: 8px; height: 8px; }
.instruments hr { width: 24px; margin: 3px 0; border: 0; border-top: 1px solid #999; }
.instruments .gap { height: 26px; }

/* Spreadsheet view */
.sheetview {
  position: relative;
  display: flex;
  height: 186px;
  flex: none;
  padding: 2px 5px 0 2px;
  border: solid #888;
  border-width: 1px 0 0;
}
.strip { display: flex; flex-direction: column; align-items: flex-end; gap: 3px; width: 25px; }
.strip .tiny { margin-right: 5px; }
.strip h2 {
  width: 25px;
  height: 143px;
  padding-top: 3px;
  writing-mode: vertical-rl;
  transform: rotate(180deg);
  background: linear-gradient(90deg, #dbe6f2, #c4d2e8);
  color: #2c3868;
  font: 14px/20px "Liberation Mono", monospace;
  white-space: nowrap;
}
.results { display: flex; flex-direction: column; flex: 1; margin-left: 7px; padding-top: 4px; }
.log {
  flex: 1;
  padding: 4px 24px;
  background: #fff;
  border: solid #999;
  border-width: 1px 4px 4px 1px;
  border-color: #999 #aaa #aaa #999;
}
.sheetview .small { height: 30px; }
.small .nets { padding-right: 16px; }
.ime {
  position: absolute;
  right: 0;
  top: -1px;
  display: flex;
  align-items: center;
  gap: 6px;
  height: 31px;
  padding-right: 3px;
  background: #fff;
  border-bottom: 1px solid #ddd;
}
.ime svg { width: 22px; height: 22px; }
.ime .sogou { width: 38px; height: 38px; margin: 0 -1px 2px 0; }
.ime .lang { width: 22px; color: #2271b5; font: bold 19px/24px "Noto Sans CJK SC", sans-serif; }

.status {
  display: flex;
  align-items: center;
  height: 27px;
  flex: none;
  padding: 0 6px 0 3px;
  border-top: 1px solid #ccc;
}
.dash { margin-left: auto; }
.tran { margin-left: 346px; }
.cells { display: flex; gap: 3px; margin-left: 84px; }
.cells i { width: 6px; height: 14px; border: solid #bbb; border-width: 1px 0 0 1px; }
```
